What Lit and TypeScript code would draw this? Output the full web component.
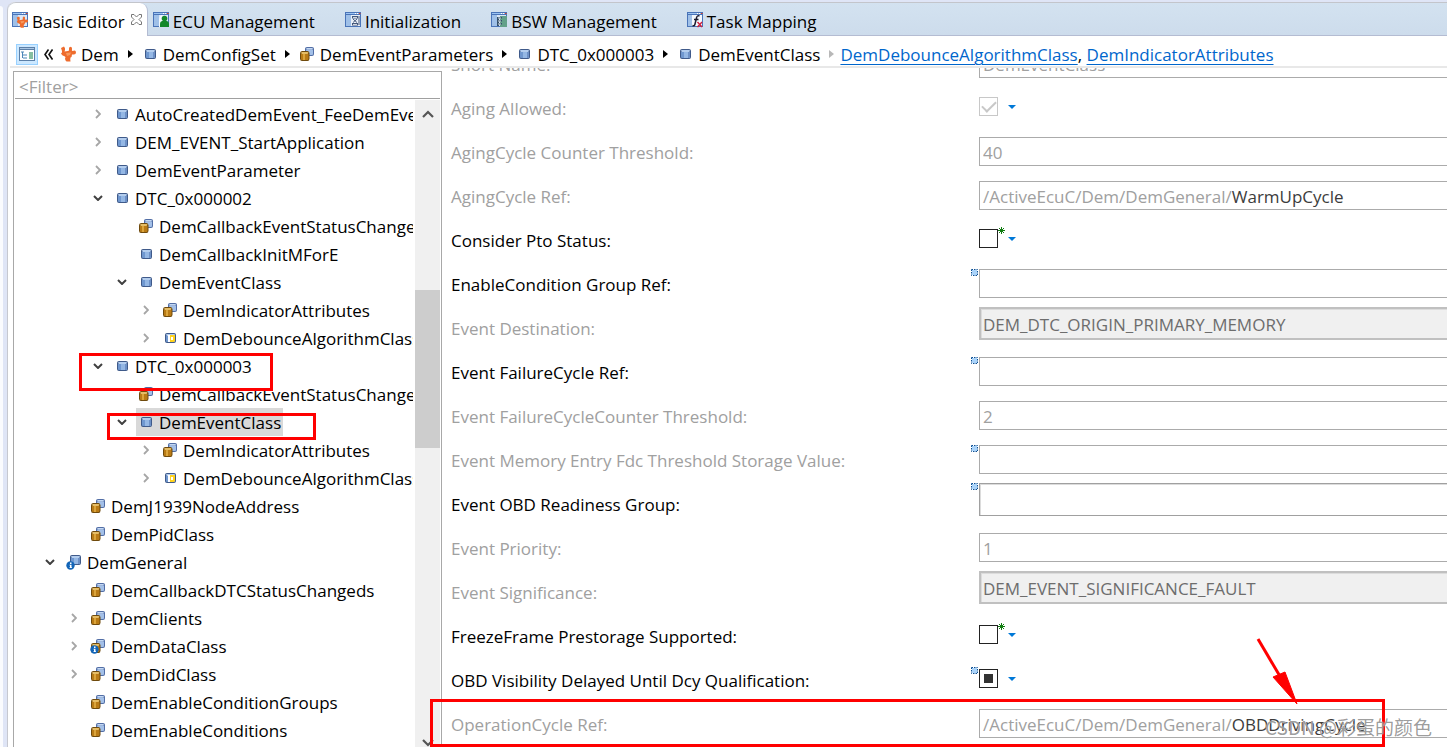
import { LitElement, html, css, svg, nothing } from "lit";
import { customElement } from "lit/decorators.js";
import { classMap } from "lit/directives/class-map.js";
import { styleMap } from "lit/directives/style-map.js";

const cube = (x = 3, y = 3) => svg`
  <g transform="translate(${x} ${y})">
    <path d="M0 2Q0 0 2 0H9Q11 0 11 2V8Q11 10 9 10H2Q0 10 0 8Z" fill="#3f5a8a"/>
    <path d="M1 3H4V9H2Q1 9 1 8Z" fill="#6f97cf"/>
    <path d="M4 3H10V8Q10 9 9 9H4Z" fill="#94b7e4"/>
    <path d="M8 3H10V8Q10 9 9 9H8Z" fill="#6d90c6"/>
    <path d="M1 2Q1 1 2 1H9Q10 1 10 2L9 3H2Z" fill="#b3cdee"/>
  </g>`;
const stack = svg`
  <path d="M6 2.5Q6 1 8 1H13Q15 1 15 2.5V8Q15 10 13 10H8Q6 10 6 8Z" fill="#526ea6"/>
  <path d="M7 3.5H14V8Q14 9 13 9H8Z" fill="#a3c0e8"/>
  <path d="M7 2.5Q7.500 2 8 2H13Q14 2 14 2.500L13 3.500H8Z" fill="#c3d8f3"/>
  <path d="M1 7.500Q1 5 3 5H8.500Q10.500 5 10.500 7.500V12.500Q10.500 15 8.500 15H3Q1 15 1 12.500Z" fill="#6f4a0c"/>
  <path d="M2 8H9.500V13Q9.500 14 8.500 14H3Q2 14 2 13Z" fill="#b97b16"/>
  <path d="M4 8H6V14H4Z" fill="#dba53c"/>
  <path d="M2 7Q2.500 6 3 6H8.500Q9.500 6 9.500 7L8.500 8H3Z" fill="#e6bd66"/>`;
const info = svg`
  <circle cx="4.500" cy="11.500" r="4.200" fill="#1265b8"/>
  <path d="M4 8.500H5.500V10H4ZM3.500 10.800H5.500V13.200H6V14H3.500V13.200H4V11.600H3.500Z" fill="#fff"/>`;
const puzzle = svg`
  <path d="M1 2L4 0.500Q5.500 2 5 4L4.500 5.500L8 5Q9.500 5 9 3Q8.500 1 10.500 0.800Q12.500 1 12 3Q11.500 4.800 12.500 5Q16 3.500 16 6.500Q16 9 13 8.500L12 8.500Q12 11 10.500 11.500Q10 13 10.500 15.500L6.500 15.500Q5 14.500 5 12.500Q6 11.500 5 10.500Q1.500 9.500 1 7.500Q2.500 6.500 2 5Z" fill="#ee6c2e"/>
  <path d="M6 7L11 6.500L10 9L7 10Z" fill="#f79a5e"/>`;
const windowFrame = svg`
  <path d="M0 0H16V15H0Z" fill="#4a74b8"/>
  <path d="M1 3H15V14H1Z" fill="#dbe8f7"/>
  <path d="M1 3H6V14H1Z" fill="#9fc0e8"/>
  <path d="M1 1H10V2H1Z" fill="#9cc4f2"/>
  <path d="M10 1H11.500V2H10ZM12 1H13.500V2H12Z" fill="#fff"/><path d="M14 1H15.500V2H14Z" fill="#d8432f"/>`;

const ICONS: Record<string, unknown> = {
  cube: cube(),
  stack,
  cubeInfo: svg`${cube(4, 1)}${info}`,
  stackInfo: svg`${stack}${info}`,
  choice: svg`${cube()}<path d="M8 5H13V11L12 12H8Z" fill="#ffd21f"/><path d="M6 5H8V12H6ZM9 7H11V10H9Z" fill="#fff"/>`,
  puzzle,
  basic: svg`${windowFrame}<g transform="translate(4 4) scale(.75)">${puzzle}</g>`,
  ecu: svg`${windowFrame}<path d="M6 8Q6 5 8 3L10 3V15H6Z" fill="#f2f7fc"/><circle cx="11.500" cy="6.500" r="2.800" fill="#14882a"/><path d="M7 15V11.500Q7 9.500 9 9H14Q16 9.500 16 11.500V15Z" fill="#14882a"/>`,
  init: svg`${windowFrame}<path d="M6 3H15V14H6Z" fill="#e9eff8"/><path d="M7 4H13V6.500H7ZM7 11H13V13.500H7Z" fill="#44597c"/><path d="M8 5H12V5.800H8ZM8 12H12V12.800H8Z" fill="#fff"/><path d="M8 7L12 10.500M12 7L8 10.500" stroke="#44597c"/><path d="M14 4V13" stroke="#44597c"/>`,
  bsw: svg`${windowFrame}<path d="M9 4H16V15H9Z" fill="#63a089"/><path d="M6 5H11V6.500H8V8H11V9.500H8V11H11V12.500H8V14H6Z" fill="#34506a"/><path d="M7 6H10M7 9H10M7 12H10" stroke="#fff" stroke-width=".8"/>`,
  task: svg`${windowFrame}<path d="M5 3H15V14H5Z" fill="#f4f8fd"/><path d="M12.500 4Q10 3 9.500 6L8 12Q7.500 14.500 5.500 13.500M7 7.500H11.500" fill="none" stroke="#1c1c30" stroke-width="1.500"/><path d="M10.500 10L15 15M15 10L10.500 15" stroke="#cf1f3c" stroke-width="1.400"/>`,
  outline: svg`<path d="M0 1H16V15H0Z" fill="#5c80a8"/><path d="M1 4H15V14H1Z" fill="#fff"/><path d="M1 2H15V3H1Z" fill="#a9c6e4"/><path d="M10 6H14V13H10Z" fill="#86bfa2"/><path d="M2 6H5M4 9H8M4 12H8M3.500 6V12" stroke="#4b86b8" fill="none"/>`,
};

const icon = (name: string) =>
  html`<svg class="icon" viewBox="0 0 16 16" aria-hidden="true">${ICONS[name]}</svg>`;

interface Node { level: number; name: string; icon: string; state?: "open" | "closed"; selected?: boolean }

const NODES: Node[] = [
  { level: 2, name: "AutoCreatedDemEvent_FeeDemEvent", icon: "cube", state: "closed" },
  { level: 2, name: "DEM_EVENT_StartApplication", icon: "cube", state: "closed" },
  { level: 2, name: "DemEventParameter", icon: "cube", state: "closed" },
  { level: 2, name: "DTC_0x000002", icon: "cube", state: "open" },
  { level: 3, name: "DemCallbackEventStatusChanged", icon: "stack" },
  { level: 3, name: "DemCallbackInitMForE", icon: "cube" },
  { level: 3, name: "DemEventClass", icon: "cube", state: "open" },
  { level: 4, name: "DemIndicatorAttributes", icon: "stack", state: "closed" },
  { level: 4, name: "DemDebounceAlgorithmClass", icon: "choice", state: "closed" },
  { level: 2, name: "DTC_0x000003", icon: "cube", state: "open" },
  { level: 3, name: "DemCallbackEventStatusChanged", icon: "stack" },
  { level: 3, name: "DemEventClass", icon: "cube", state: "open", selected: true },
  { level: 4, name: "DemIndicatorAttributes", icon: "stack", state: "closed" },
  { level: 4, name: "DemDebounceAlgorithmClass", icon: "choice", state: "closed" },
  { level: 1, name: "DemJ1939NodeAddress", icon: "stack" },
  { level: 1, name: "DemPidClass", icon: "stack" },
  { level: 0, name: "DemGeneral", icon: "cubeInfo", state: "open" },
  { level: 1, name: "DemCallbackDTCStatusChangeds", icon: "stack" },
  { level: 1, name: "DemClients", icon: "stack", state: "closed" },
  { level: 1, name: "DemDataClass", icon: "stackInfo", state: "closed" },
  { level: 1, name: "DemDidClass", icon: "stack", state: "closed" },
  { level: 1, name: "DemEnableConditionGroups", icon: "stack" },
  { level: 1, name: "DemEnableConditions", icon: "stack" },
];

interface Field {
  label: string;
  kind: "text" | "ref" | "select" | "check";
  value?: string;
  disabled?: boolean;
  marker?: boolean;
  star?: boolean;
  checked?: boolean;
  mixed?: boolean;
}

const FIELDS: Field[] = [
  { label: "Short Name:", kind: "text", value: "DemEventClass", disabled: true },
  { label: "Aging Allowed:", kind: "check", checked: true, disabled: true },
  { label: "AgingCycle Counter Threshold:", kind: "text", value: "40", disabled: true },
  { label: "AgingCycle Ref:", kind: "ref", value: "WarmUpCycle", disabled: true },
  { label: "Consider Pto Status:", kind: "check", star: true },
  { label: "EnableCondition Group Ref:", kind: "text", marker: true },
  { label: "Event Destination:", kind: "select", value: "DEM_DTC_ORIGIN_PRIMARY_MEMORY", disabled: true },
  { label: "Event FailureCycle Ref:", kind: "text", marker: true },
  { label: "Event FailureCycleCounter Threshold:", kind: "text", value: "2", disabled: true },
  { label: "Event Memory Entry Fdc Threshold Storage Value:", kind: "text", disabled: true, marker: true },
  { label: "Event OBD Readiness Group:", kind: "select", marker: true },
  { label: "Event Priority:", kind: "text", value: "1", disabled: true },
  { label: "Event Significance:", kind: "select", value: "DEM_EVENT_SIGNIFICANCE_FAULT", disabled: true },
  { label: "FreezeFrame Prestorage Supported:", kind: "check", star: true },
  { label: "OBD Visibility Delayed Until Dcy Qualification:", kind: "check", mixed: true, marker: true },
  { label: "OperationCycle Ref:", kind: "ref", value: "OBDDrivingCycle", disabled: true },
];

const base = css`
  * { box-sizing: border-box; }
  button, input, select { font: inherit; color: inherit; margin: 0; }
  button { border: 0; padding: 0; background: none; display: grid; place-items: center; }
  svg { display: block; flex: none; }
  .icon { width: 16px; height: 16px; }
`;

@customElement("editor-tabs")
export class EditorTabs extends LitElement {
  static styles = [base, css`
    :host { display: block; flex: none; }
    .tabs {
      display: flex; height: 34px; border-top: 1px solid #c3c5cb; border-bottom: 1px solid #b4bcd2;
      border-top-left-radius: 8px; background: linear-gradient(#d3e2f0, #cddcec);
    }
    .tab { display: flex; align-items: center; gap: 4px; height: 34px; padding: 0 25px 0 5px; white-space: nowrap; }
    .tab .name { padding-top: 4px; line-height: 24px; }
    .active {
      background: #fff; height: 33px; border-right: 1px solid #b4bcd2; border-radius: 8px 8px 0 0;
      padding: 0 4px;
    }
    .close { width: 12px; height: 12px; margin-left: 2px; }
  `];
  render() {
    return html`<nav class="tabs" role="tablist">
      <div class="tab active" role="tab" aria-selected="true">
        ${icon("basic")}<span class="name">Basic Editor</span>
        <button class="close" aria-label="Close">
          <svg width="11" height="11" viewBox="0 0 11 11" fill="#fff" stroke="#777">
            <path d="M.5 .5H3L5.500 3L8 .5H10.500V3L8 5.500L10.500 8V10.500H8L5.500 8L3 10.500H.5V8L3 5.500L.5 3Z"/>
          </svg>
        </button>
      </div>
      ${[["ecu", "ECU Management"], ["init", "Initialization"], ["bsw", "BSW Management"], ["task", "Task Mapping"]].map(
        ([i, name]) => html`<div class="tab" role="tab">${icon(i)}<span class="name">${name}</span></div>`)}
    </nav>`;
  }
}

@customElement("bread-crumbs")
export class BreadCrumbs extends LitElement {
  static styles = [base, css`
    :host { display: block; flex: none; }
    .bar {
      display: flex; align-items: center; height: 32px; margin-left: 2px; padding: 6px 0 0 6px; white-space: nowrap;
      border-bottom: 2px solid #e8e8e8;
    }
    .toggle { width: 22px; height: 21px; background: #cce8ff; border: 1px solid #99d1ff; }
    .back { margin-left: 6px; }
    .crumb { display: flex; align-items: center; gap: 5px; margin-left: 9px; }
    .crumb.first { margin-left: 7px; }
    .crumb span { padding-top: 2px; }
    .arrow { margin-left: 9px; }
    .links { margin-left: 6px; padding-top: 2px; line-height: 22px; }
    a { color: #0066cc; text-decoration: underline; text-underline-offset: 3px; text-decoration-thickness: 1px; }
  `];
  private arrow(color: string) {
    return html`<svg class="arrow" width="5" height="8" viewBox="0 0 5 8"><path d="M0 0L5 4L0 8Z" fill=${color}/></svg>`;
  }
  render() {
    const crumbs = [["puzzle", "Dem"], ["cube", "DemConfigSet"], ["stack", "DemEventParameters"], ["cube", "DTC_0x000003"], ["cube", "DemEventClass"]];
    return html`<div class="bar">
      <button class="toggle" aria-label="Toggle outline">${icon("outline")}</button>
      <svg class="back" width="9" height="11" viewBox="0 0 9 11" fill="none" stroke="#111" stroke-width="1.600"><path d="M4.500 .5L1 5.500L4.500 10.500M8.500 .5L5 5.500L8.500 10.500"/></svg>
      ${crumbs.map(([i, name], n) => html`
        <span class=${classMap({ crumb: true, first: n === 0 })}>${icon(i)}<span>${name}</span></span>
        ${this.arrow(n === crumbs.length - 1 ? "#b8b8b8" : "#000")}`)}
      <span class="links"><a href="#debounce">DemDebounceAlgorithmClass</a>, <a href="#indicator">DemIndicatorAttributes</a></span>
    </div>`;
  }
}

@customElement("config-tree")
export class ConfigTree extends LitElement {
  static styles = [base, css`
    :host { display: flex; flex-direction: column; border: 1px solid #a8a8a8; border-bottom: 0; min-height: 0; }
    .filter {
      flex: none; height: 27px; border: 0; border-bottom: 1px solid #a0a0a0; margin: 0 1px; padding: 3px 4px 0;
      outline: 0; background: #fff;
    }
    .filter::placeholder { color: #a0a0a0; opacity: 1; }
    .body { display: flex; gap: 2px; flex: 1; min-height: 0; padding: 1px 1px 0 0; overflow: hidden; }
    ul { flex: 1; min-width: 0; list-style: none; margin: 0; padding: 0; overflow: hidden; }
    li { display: flex; align-items: center; height: 28px; white-space: nowrap; gap: 6px; }
    .twisty { width: 16px; height: 28px; flex: none; }
    .item { display: flex; align-items: center; gap: 5px; height: 28px; padding: 0 2px; }
    .item span { padding-top: 2px; }
    .selected { background: #d9d9d9; }
    .scroll { flex: none; width: 25px; background: #f0f0f0; display: flex; flex-direction: column; }
    .step { height: 28px; flex: none; }
    .step.down { height: 8px; place-items: end center; }
    .track { flex: 1; display: grid; grid-template-rows: 162fr 158fr 291fr; min-height: 0; }
    .thumb { grid-row: 2; background: #cdcdcd; }
  `];
  private twisty(state?: string) {
    if (!state) return html`<span class="twisty"></span>`;
    return html`<button class="twisty" aria-label=${state === "open" ? "Collapse" : "Expand"}>
      ${state === "open"
        ? html`<svg width="10" height="6" viewBox="0 0 10 6" fill="none" stroke="#404040" stroke-width="2"><path d="M1 1L5 5L9 1"/></svg>`
        : html`<svg width="6" height="10" viewBox="0 0 6 10" fill="none" stroke="#a6a6a6" stroke-width="1.800"><path d="M1 1L5 5L1 9"/></svg>`}
    </button>`;
  }
  render() {
    return html`
      <input class="filter" type="text" placeholder="&lt;Filter&gt;" aria-label="Filter" />
      <div class="body">
        <ul role="tree">
          ${NODES.map((n) => html`<li role="treeitem" style=${styleMap({ paddingLeft: `${28 + n.level * 24}px` })}>
            ${this.twisty(n.state)}
            <span class=${classMap({ item: true, selected: !!n.selected })}>${icon(n.icon)}<span>${n.name}</span></span>
          </li>`)}
        </ul>
        <div class="scroll">
          <button class="step" aria-label="Scroll up"><svg width="12" height="8" viewBox="0 0 12 8" fill="none" stroke="#555" stroke-width="2.200"><path d="M1 7L6 2L11 7"/></svg></button>
          <div class="track"><div class="thumb"></div></div>
          <button class="step down" aria-label="Scroll down"><svg width="12" height="8" viewBox="0 0 12 8" fill="none" stroke="#555" stroke-width="2.200"><path d="M1 1L6 6L11 1"/></svg></button>
        </div>
      </div>`;
  }
}

@customElement("config-form")
export class ConfigForm extends LitElement {
  static styles = [base, css`
    :host { display: block; overflow: hidden; }
    .fields { margin-top: -26px; padding-left: 9px; }
    .row { display: grid; grid-template-columns: 528px 1fr; height: 44px; align-items: start; }
    .row > label { padding-top: 11px; line-height: 24px; color: #000; }
    .row.disabled > label { color: #a0a0a0; }
    .control { position: relative; display: flex; margin-top: 7px; }
    .control.select { margin-top: 1px; }
    .control.check { margin-top: 11px; gap: 10px; align-items: center; width: max-content; }
    .box {
      flex: 1; min-width: 0; display: flex; height: 29px; border: 1px solid #ababab; border-right: 0;
      background: #fff; color: #a0a0a0; padding: 2px 3px 0; align-items: center;
    }
    .box input { flex: 1; min-width: 0; border: 0; padding: 0; background: none; outline: 0; color: #a0a0a0; height: 24px; }
    .box.ref input { color: #3c3c3c; }
    select {
      appearance: none; flex: 1; height: 33px; border: 1px solid #a0a0a0; border-right: 0; border-radius: 0; outline: 0;
      background: #fff; box-shadow: inset 1px 1px #dcdcdc; padding: 2px 3px 0; opacity: 1;
    }
    select:disabled { background: #f0f0f0; border: 2px solid #c0c0c0; border-right: 0; color: #6d6d6d; padding: 2px 2px 0; }
    .tick { appearance: none; width: 19px; height: 19px; border: 1px solid #222; background: #fff; display: grid; place-items: center; }
    .tick:disabled { border-color: #c8c8c8; }
    .tick:checked::before {
      content: ""; width: 12px; height: 6px; border: solid #c8c8c8; border-width: 0 0 2px 2px; transform: translateY(-2px) rotate(-45deg);
    }
    .tick:indeterminate::before { content: ""; width: 9px; height: 9px; background: #333; }
    .drop { width: 8px; height: 4px; }
    .marker { position: absolute; left: -8px; top: 0; }
    .check .marker { top: -2px; }
    .star { position: absolute; left: 19px; top: -2px; }
  `];
  private control(f: Field, id: string) {
    switch (f.kind) {
      case "check":
        return html`
          <input id=${id} class="tick" type="checkbox" .checked=${!!f.checked} .indeterminate=${!!f.mixed} ?disabled=${!!f.disabled} />
          <button class="drop" aria-label="Options"><svg width="8" height="4" viewBox="0 0 8 4"><path d="M0 0H8L4 4Z" fill="#0078d7"/></svg></button>`;
      case "select":
        return html`<select id=${id} ?disabled=${!!f.disabled}><option>${f.value ?? ""}</option></select>`;
      case "ref":
        return html`<div class="box ref"><span>/ActiveEcuC/Dem/DemGeneral/</span><input id=${id} type="text" readonly .value=${f.value ?? ""} /></div>`;
      default:
        return html`<div class="box"><input id=${id} type="text" .value=${f.value ?? ""} ?disabled=${!!f.disabled} /></div>`;
    }
  }
  render() {
    return html`<div class="fields">${FIELDS.map((f, i) => html`
      <div class=${classMap({ row: true, disabled: !!f.disabled })}>
        <label for="field-${i}">${f.label}</label>
        <div class="control ${f.kind}">
          ${this.control(f, `field-${i}`)}
          ${f.marker ? html`<svg class="marker" width="7" height="7" viewBox="0 0 7 7"><path d="M1 1H6V6H1Z" fill="#a9d3fa"/><path d="M.5 .5H6.500V6.500H.5Z" fill="none" stroke="#0b4f94" stroke-dasharray="1.500 1"/></svg>` : nothing}
          ${f.star ? html`<svg class="star" width="7" height="7" viewBox="0 0 7 7" stroke="#107c10"><path d="M3.500 0V7M0 3.500H7M1 1L6 6M6 1L1 6"/></svg>` : nothing}
        </div>
      </div>`)}</div>`;
  }
}

@customElement("app-root")
export class AppRoot extends LitElement {
  static styles = [base, css`
    :host {
      display: flex; box-sizing: border-box; position: relative; height: 100vh; overflow: hidden; background: #dfe5f6; color: #000;
      font: 17px/22px "Open Sans", "Noto Sans", sans-serif; padding-top: 2px;
    }
    .neighbour { flex: none; width: 3px; margin: 4px 4px 0 0; background: #fafbfe; border-top-right-radius: 3px; }
    .editor { flex: 1; min-width: 0; display: flex; flex-direction: column; background: #fff; border-left: 1px solid #c6c8d0; border-top-left-radius: 8px; }
    .panes { flex: 1; min-height: 0; display: grid; grid-template-columns: 429px minmax(0, 1fr); padding-left: 5px; }
    config-tree { margin-top: 3px; }
    .mark { position: absolute; border: 3px solid #f00; pointer-events: none; }
    .mark.dtc { left: 79px; top: 353px; width: 194px; height: 38px; }
    .mark.event { left: 107px; top: 413px; width: 209px; height: 27px; }
    .mark.cycle { left: 430px; top: 699px; width: 955px; height: 48px; }
    .pointer { position: absolute; left: 1255px; top: 636px; pointer-events: none; }
    .watermark {
      position: absolute; right: 15px; bottom: 6px; font: 19px/28px "Noto Sans CJK SC", sans-serif; color: rgba(100, 100, 100, .65);
      text-shadow: 0 0 1px #fff; white-space: nowrap; pointer-events: none;
    }
  `];
  render() {
    return html`
      <div class="neighbour"></div>
      <main class="editor">
        <editor-tabs></editor-tabs>
        <bread-crumbs></bread-crumbs>
        <div class="panes">
          <config-tree></config-tree>
          <config-form></config-form>
        </div>
      </main>
      <div class="mark dtc"></div>
      <div class="mark event"></div>
      <div class="mark cycle"></div>
      <svg class="pointer" width="46" height="72" viewBox="0 0 46 72" fill="#f00" stroke="#f00">
        <path d="M3 3L26 42" stroke-width="3"/><path d="M18 41L30 36L42 68Z"/>
      </svg>
      <div class="watermark">CSDN @彩蛋的颜色</div>`;
  }
}
